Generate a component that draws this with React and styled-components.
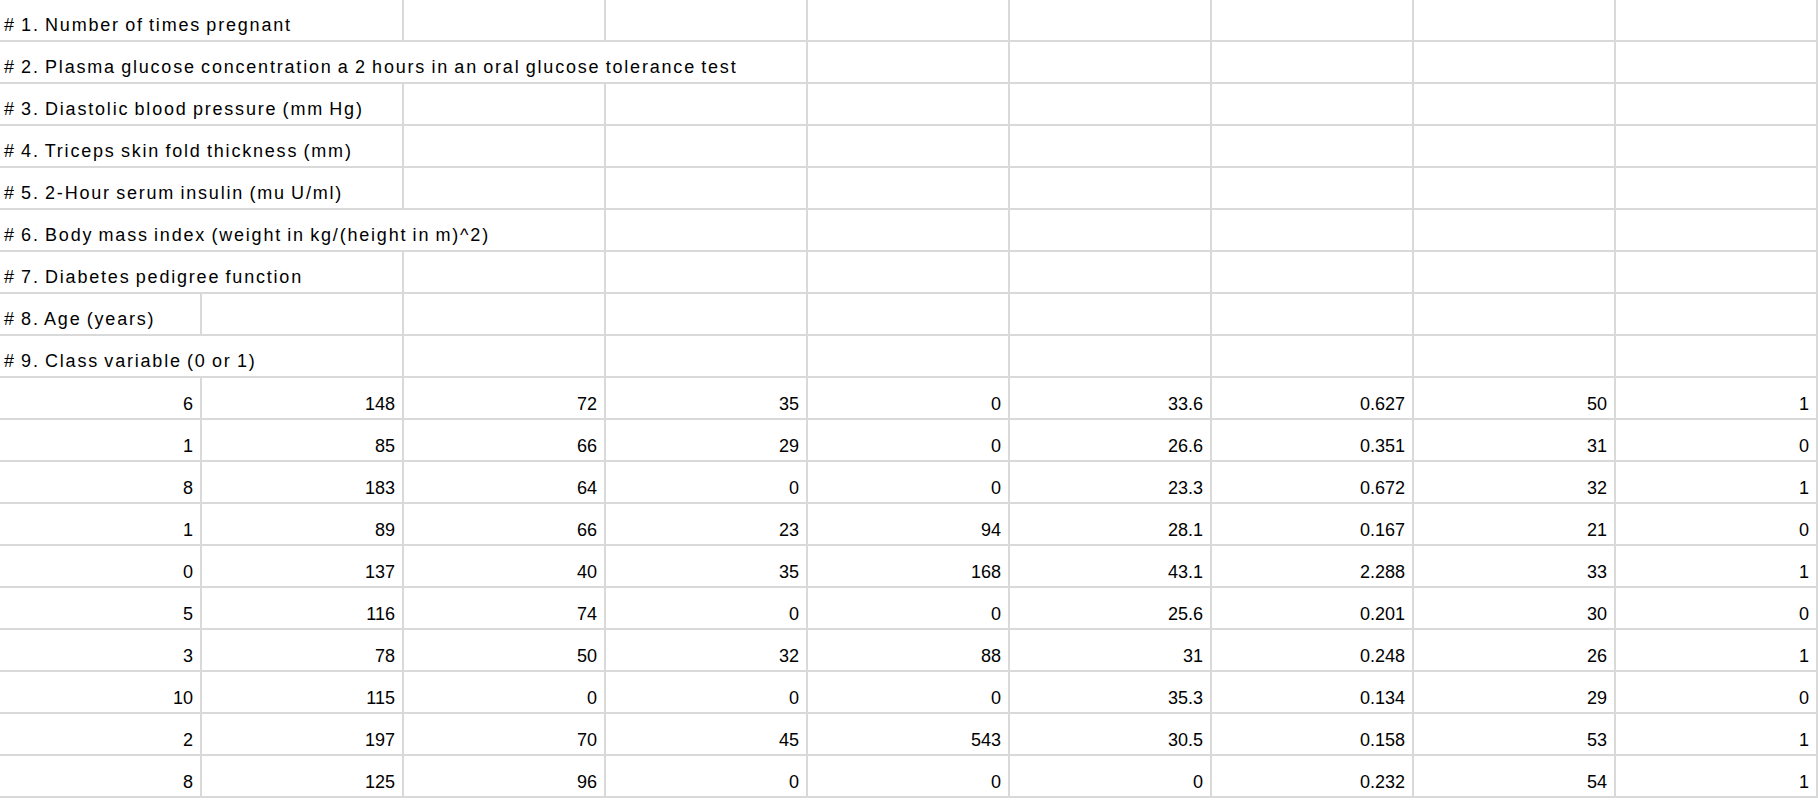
import React from 'react'
import styled, { createGlobalStyle } from 'styled-components'

const GlobalStyle = createGlobalStyle`
  html, body {
    margin: 0;
    padding: 0;
    background: #ffffff;
  }
  body {
    font-family: "Liberation Sans", Arial, sans-serif;
    color: #000000;
  }
`

const Sheet = styled.div`
  display: grid;
  grid-template-columns: repeat(9, 202px);
  grid-auto-rows: 42px;
  width: 1818px;
  overflow: hidden;
`

const Cell = styled.div`
  box-sizing: border-box;
  border-right: 2px solid #d9d9d9;
  border-bottom: 2px solid #d9d9d9;
  grid-column: span ${props => props.span || 1};
  white-space: nowrap;
  overflow: hidden;
  font-size: 18px;
  line-height: 28px;
  padding-top: 11px;
`

const NoteCell = styled(Cell)`
  letter-spacing: 1.8px;
  word-spacing: -1.5px;
  padding-left: 4px;
`

const NumberCell = styled(Cell)`
  text-align: right;
  padding-right: 7px;
  padding-top: 12px;
`

const notes = [
  ['# 1. Number of times pregnant', 2],
  ['# 2. Plasma glucose concentration a 2 hours in an oral glucose tolerance test', 4],
  ['# 3. Diastolic blood pressure (mm Hg)', 2],
  ['# 4. Triceps skin fold thickness (mm)', 2],
  ['# 5. 2-Hour serum insulin (mu U/ml)', 2],
  ['# 6. Body mass index (weight in kg/(height in m)^2)', 3],
  ['# 7. Diabetes pedigree function', 2],
  ['# 8. Age (years)', 1],
  ['# 9. Class variable (0 or 1)', 2],
]

const rows = [
  [6, 148, 72, 35, 0, 33.6, 0.627, 50, 1],
  [1, 85, 66, 29, 0, 26.6, 0.351, 31, 0],
  [8, 183, 64, 0, 0, 23.3, 0.672, 32, 1],
  [1, 89, 66, 23, 94, 28.1, 0.167, 21, 0],
  [0, 137, 40, 35, 168, 43.1, 2.288, 33, 1],
  [5, 116, 74, 0, 0, 25.6, 0.201, 30, 0],
  [3, 78, 50, 32, 88, 31, 0.248, 26, 1],
  [10, 115, 0, 0, 0, 35.3, 0.134, 29, 0],
  [2, 197, 70, 45, 543, 30.5, 0.158, 53, 1],
  [8, 125, 96, 0, 0, 0, 0.232, 54, 1],
]

export default function App() {
  return (
    <>
      <GlobalStyle />
      <Sheet>
        {notes.map(([text, span], i) => (
          <React.Fragment key={'n' + i}>
            <NoteCell span={span}>{text}</NoteCell>
            {Array.from({ length: 9 - span }).map((_, j) => (
              <Cell key={j} />
            ))}
          </React.Fragment>
        ))}
        {rows.map((row, i) =>
          row.map((value, j) => (
            <NumberCell key={i + '-' + j}>{value}</NumberCell>
          ))
        )}
      </Sheet>
    </>
  )
}
